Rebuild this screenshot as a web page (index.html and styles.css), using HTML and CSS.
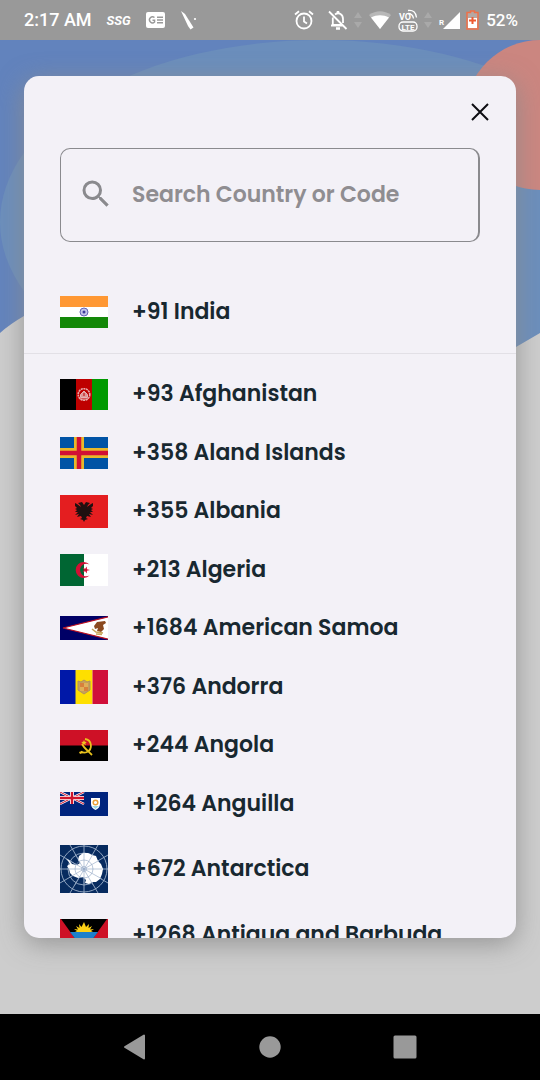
FILE: index.html
```html
<!DOCTYPE html>
<html lang="en">
<head>
<meta charset="utf-8">
<meta name="viewport" content="width=device-width, initial-scale=1">
<title>Select country</title>
<link rel="stylesheet" href="styles.css">
</head>
<body>
<header class="status">
  <div class="status-left">
    <span class="clock">2:17 AM</span>
    <span class="carrier">SSG</span>
    <svg width="20" height="16" viewBox="0 0 20 16" aria-hidden="true"><rect width="19" height="16" rx="2" fill="#fff"/><path d="M8.500 5.600A3 3 0 1 0 8.600 10V8.200H6.500M11 5.200h6M11 8h6M11 10.800h6" fill="none" stroke="#999" stroke-width="1.400"/></svg>
    <svg width="20" height="20" viewBox="0 0 20 20" aria-hidden="true"><path d="M0 1 4 4 12.500 17.500 9.500 19.500 7 16Z" fill="#fff"/><circle cx="14" cy="9" r="1.100" fill="#fff"/></svg>
  </div>
  <div class="status-right">
    <svg class="alarm" width="20" height="20" viewBox="0 0 20 20" fill="none" stroke="#fff" stroke-width="1.800" aria-hidden="true"><circle cx="10" cy="11" r="7.500"/><path d="M10 6.500V11.500l3 2M1 4.500l4-3.300M19 4.500l-4-3.300"/></svg>
    <svg width="20" height="20" viewBox="0 0 20 20" fill="none" stroke="#fff" stroke-width="1.800" aria-hidden="true"><path d="M1 1.500 18.500 19M7 4.500c4-3 8 0 8 4.500v4M4.800 7.500V15H14M3 15.500h12"/><path d="M10 1v2M8 18.500h4" stroke-width="2.500"/></svg>
    <svg width="8" height="18" viewBox="0 0 8 18" fill="#a9a9a9" aria-hidden="true"><path d="M4 1 8 7H0ZM4 17 0 11h8Z"/></svg>
    <svg width="24" height="20" viewBox="0 0 24 20" aria-hidden="true"><path d="M1 5C8 0 16 0 23 5L12 19Z" fill="#b8b8b8"/><path d="M3 7.500C9 4.500 15 4.500 21 7.500L12 19Z" fill="#fff"/></svg>
    <svg width="20" height="24" viewBox="0 0 20 24" aria-hidden="true"><text x="1" y="12" font-size="9">VO</text><rect x="1" y="14" width="18" height="9" rx="4" fill="none" stroke="#fff" stroke-width="1.300"/><text x="3.500" y="21.500" font-size="8">LTE</text><path d="M10 2.500c5-1 8 2 8.500 7M10 5.500c3 0 5 2 5.500 5" fill="none" stroke="#fff" stroke-width="1.300"/></svg>
    <svg width="8" height="18" viewBox="0 0 8 18" fill="#a9a9a9" aria-hidden="true"><path d="M4 1 8 7H0ZM4 17 0 11h8Z"/></svg>
    <svg width="22" height="20" viewBox="0 0 22 20" aria-hidden="true"><path d="M22 2V19H5Z" fill="#fff"/><text x="1" y="15" font-size="8">R</text></svg>
    <svg width="14" height="20" viewBox="0 0 14 20" aria-hidden="true"><path d="M4.500 2.500V1h4v1.500H12V19H1V2.500Z" fill="#b5a8a4" stroke="#ee7048" stroke-width="1.500"/><path d="M2 8h9v10H2Z" fill="#fff"/><path d="M6.500 7v7M3 10.500h7" stroke="#ee5a30" stroke-width="2"/></svg>
    <span class="level">52%</span>
  </div>
</header>

<main class="screen">
  <svg class="backdrop" viewBox="0 0 540 320" preserveAspectRatio="none" aria-hidden="true">
    <rect width="540" height="320" fill="#6283bd"/>
    <ellipse cx="320" cy="182" rx="320" ry="182" fill="#6b8ebc"/>
    <circle cx="540" cy="75" r="75" fill="#cb8680"/>
    <path d="M0 293Q10 284 24 276L270 230 516 307 540 293V320H0Z" fill="#cdcdcd"/>
  </svg>

  <section class="dialog" role="dialog" aria-label="Select country">
    <div class="dialog-head">
      <button class="close" type="button" aria-label="Close"><svg width="24" height="24" viewBox="0 0 24 24" fill="none" stroke="#0c0c12" stroke-width="2"><path d="M4 4 20 20M20 4 4 20"/></svg></button>
    </div>
    <label class="search">
      <svg width="36" height="36" viewBox="0 0 24 24" fill="#8a8a8e" aria-hidden="true"><path d="M15.500 14h-.79l-.28-.27A6.470 6.470 0 0 0 16 9.500 6.500 6.500 0 1 0 9.500 16c1.610 0 3.090-.59 4.230-1.570l.27.28v.79l5 4.990L20.490 19l-4.990-5zm-6 0a4.500 4.500 0 1 1 0-9 4.500 4.500 0 0 1 0 9z"/></svg>
      <input type="text" placeholder="Search Country or Code" aria-label="Search Country or Code">
    </label>

    <ul class="list current">
      <li><button class="country" type="button">
        <svg class="flag" viewBox="0 0 48 32" aria-hidden="true"><path fill="#fff" d="M0 0h48v32H0z"/><path fill="#ff9833" d="M0 0h48v11H0z"/><path fill="#138808" d="M0 21h48v11H0z"/><circle cx="24" cy="16" r="4" fill="#c5c5ea" stroke="#6464b8"/><circle cx="24" cy="16" r="1.500" fill="#3c3c9c"/></svg>
        +91 India</button></li>
    </ul>

    <ul class="list countries">
      <li><button class="country" type="button">
        <svg class="flag" viewBox="0 0 48 31" aria-hidden="true"><path d="M0 0h16v31H0z"/><path fill="#be0000" d="M16 0h16v31H16z"/><path fill="#090" d="M32 0h16v31H32z"/><circle cx="24" cy="15.500" r="5.800" fill="none" stroke="#e7a9a9" stroke-width="1.600" stroke-dasharray="2 .6"/><path d="M20.500 18.500v-3L24 12l3.500 3.500v3zM20 20h8" fill="#dd9898" stroke="#e7b3b3"/><path d="M24 14v3" stroke="#b00"/></svg>
        +93 Afghanistan</button></li>
      <li><button class="country" type="button">
        <svg class="flag" viewBox="0 0 48 32" aria-hidden="true"><path fill="#0053a5" d="M0 0h48v32H0z"/><path stroke="#e8b82a" stroke-width="10" d="M19 0v32M0 16h48"/><path stroke="#d21034" stroke-width="4.500" d="M19 0v32M0 16h48"/></svg>
        +358 Aland Islands</button></li>
      <li><button class="country" type="button">
        <svg class="flag" viewBox="0 0 48 33" aria-hidden="true"><path fill="#e41e20" d="M0 0h48v33H0z"/><path fill="#201010" d="m24 10-2-3-4 1 2 2 1 2-4-3-2-1v3l2 2-2 1 2 1-2 2 3 0-3 3 4-1-2 3 4-1 1 2-2 1 3 1 1 2 1-2 3-1-2-1 1-2 4 1-2-3 4 1-3-3h3l-2-2 2-1-2-1 2-2V8l-2 1-4 3 1-2 2-2-4-1z"/></svg>
        +355 Albania</button></li>
      <li><button class="country" type="button">
        <svg class="flag" viewBox="0 0 48 32" aria-hidden="true"><path fill="#fff" d="M0 0h48v32H0z"/><path fill="#063" d="M0 0h24v32H0z"/><path fill="#d21034" d="M29.500 10.500a8 8 0 1 0 0 11 6.300 6.300 0 1 1 0-11zM30 16l-3-.8-.3-2.700-1.500 2.200-2.800-.7 1.800 2-1.800 2 2.800-.7 1.500 2.200.3-2.700z"/></svg>
        +213 Algeria</button></li>
      <li><button class="country" type="button">
        <svg class="flag" viewBox="0 0 48 24" aria-hidden="true"><path fill="#000066" d="M0 0h48v24H0z"/><path fill="#fff" stroke="#bd1021" stroke-width="1.200" d="M50 .5 3 12l47 11.500z"/><path fill="#8b4a20" d="m45 5-8 1-3 4 1 3 3-1-1 3 4 1 3-3-1-4 3-2z"/><path d="M32 13l4 3 7 1M36 18l6 .5" fill="none" stroke="#c8a45a" stroke-width="1.500"/></svg>
        +1684 American Samoa</button></li>
      <li><button class="country" type="button">
        <svg class="flag" viewBox="0 0 48 34" aria-hidden="true"><path fill="#0018a8" d="M0 0h16v34H0z"/><path fill="#fedf00" d="M15.500 0h17v34h-17z"/><path fill="#d0103a" d="M32.500 0H48v34H32.500z"/><path fill="#c6a05a" stroke="#b09060" d="M18 11l3 1 3-2 3 2 3-1v9l-3 2-3 2-3-2-3-2z"/><path fill="#d8803c" d="M20 13h4v4h-4zM24 17h4v4h-4z"/><path fill="#e0b058" d="M24 13h4v4h-4zM20 17h4v4h-4z"/></svg>
        +376 Andorra</button></li>
      <li><button class="country" type="button">
        <svg class="flag" viewBox="0 0 48 31" aria-hidden="true"><path d="M0 0h48v31H0z"/><path fill="#ce1126" d="M0 0h48v15.500H0z"/><path fill="none" stroke="#e8c21c" stroke-width="1.800" d="M25 9c7 1 8 10 2 13-2 1-4 1-6-.5M22 14c2 4 5 6 10 11"/><path fill="#f0c420" d="m24 10 .8 1.800 2 .1-1.500 1.300.5 2L24 14.100l-1.800 1.100.5-2-1.500-1.300 2-.1zM19 22l3-1 1 2-3 1z"/></svg>
        +244 Angola</button></li>
      <li><button class="country" type="button">
        <svg class="flag" viewBox="0 0 48 24" aria-hidden="true"><path fill="#00247d" d="M0 0h48v24H0z"/><path stroke="#fff" stroke-width="2.400" d="m0 0 24 12M24 0 0 12"/><path stroke="#cf142b" stroke-width="1" d="m0 0 24 12M24 0 0 12"/><path stroke="#fff" stroke-width="4" d="M12 0v12M0 6h24"/><path stroke="#cf142b" stroke-width="2.400" d="M12 0v12M0 6h24"/><path fill="#fff" d="M31 6h9v6c0 3-2 5-4.500 6C33 17 31 15 31 12z"/><path fill="#9dd7e5" d="M32 14h7l-3.500 3z"/><circle cx="35.500" cy="10.500" r="2.300" fill="none" stroke="#eba13b" stroke-width="1.500"/></svg>
        +1264 Anguilla</button></li>
      <li><button class="country" type="button">
        <svg class="flag" viewBox="0 0 48 48" aria-hidden="true"><path fill="#072b5f" d="M0 0h48v48H0z"/><g fill="none" stroke="#9fb2cb" stroke-width=".9"><circle cx="24" cy="24" r="23"/><circle cx="24" cy="24" r="16"/><path d="M24 0v48M0 24h48M10 0l28 48M38 0 10 48M0 10l48 28M48 10 0 38"/></g><path fill="#fff" d="m6 14 3 1 3 4 5 1 3-2-2-3 1-4 4-3 5 0 4 2 4 1 2 5 3 3 2 5-1 5-2 5-4 3-4 0-3 2-4-1 1-3-3-3-5 1-5-2-3-3-1-4-2-3 3-2-2-3z"/><g fill="none" stroke="#8fa4c2" stroke-width=".6"><circle cx="24" cy="24" r="9"/><circle cx="24" cy="24" r="2.500"/><path d="M24 8v32M8 24h34M15 9l18 31M33 9 15 40M10 16l32 18M38 16 10 32"/></g></svg>
        +672 Antarctica</button></li>
      <li><button class="country" type="button">
        <svg class="flag" viewBox="0 0 48 32" aria-hidden="true"><path fill="#ce1126" d="M0 0h48v32H0z"/><path d="M1 0h46L24 32z"/><path fill="#1c80cc" d="M10 13h28L32 21H16z"/><path fill="#fff" d="M15.500 20h17L24 32z"/><path fill="#fcd116" d="m15 13 2-1-3-2 4 .5-2-3.500 3.500 2-.5-4 2.500 3L24 3l2 5 3-3-.5 4L32 7l-2 3.500 4-.5-3 2 2 1z"/></svg>
        +1268 Antigua and Barbuda</button></li>
    </ul>
  </section>
</main>

<nav class="navbar" aria-label="System">
  <button type="button" aria-label="Back"><svg width="24" height="26" viewBox="0 0 24 26"><path d="M21 1.500v23L2 13Z" fill="#999" stroke="#999" stroke-width="2" stroke-linejoin="round"/></svg></button>
  <button type="button" aria-label="Home"><svg width="24" height="24" viewBox="0 0 24 24"><circle cx="12" cy="12" r="10.700" fill="#999"/></svg></button>
  <button type="button" aria-label="Recent apps"><svg width="24" height="24" viewBox="0 0 24 24"><rect x=".5" y=".5" width="23" height="23" rx="1.500" fill="#999"/></svg></button>
</nav>
</body>
</html>
```
FILE: styles.css
```css
* { box-sizing: border-box; }

body {
  margin: 0;
  height: 100vh;
  display: flex;
  flex-direction: column;
  background: #cdcdcd;
  font-family: Poppins, Inter, "Noto Sans", sans-serif;
}

button {
  padding: 0;
  border: 0;
  background: none;
  font: inherit;
  color: inherit;
}

svg { display: block; flex: none; }

.status {
  display: flex;
  justify-content: space-between;
  align-items: center;
  height: 40px;
  padding: 0 22px 0 24px;
  background: #999;
  color: #fff;
  font-family: Roboto, sans-serif;
}

.status-left,
.status-right { display: flex; align-items: center; }
.status-left { gap: 15px; }
.status-right { gap: 6px; }
.status text { fill: #fff; font-family: Roboto, sans-serif; font-weight: 700; }
.clock { font-size: 18px; font-weight: 500; line-height: 20px; }
.level { font-size: 17px; font-weight: 500; line-height: 20px; }
.carrier { font-size: 13px; font-style: italic; font-weight: 700; }
.alarm { margin-right: 8px; }

.screen {
  position: relative;
  flex: 1;
  min-height: 0;
  display: flex;
  padding: 36px 24px 76px;
  overflow: hidden;
}

.backdrop {
  position: absolute;
  top: 0;
  left: 0;
  width: 100%;
  height: 320px;
}

.dialog {
  position: relative;
  flex: 1;
  min-width: 0;
  overflow: hidden;
  border-radius: 15px;
  background: #f3f1f7;
  box-shadow: 0 6px 26px rgba(140, 140, 140, 0.85);
  color: #182830;
}

.dialog-head {
  display: flex;
  justify-content: flex-end;
  padding: 24px;
}

.search {
  display: flex;
  align-items: center;
  gap: 18px;
  height: 94px;
  margin: 0 36px;
  padding: 0 17px 2px;
  border: 1px solid #8a8a8e;
  border-right-width: 2px;
  border-radius: 10px;
}

.search input {
  flex: 1;
  min-width: 0;
  padding: 0;
  border: 0;
  outline: 0;
  background: none;
  font: inherit;
  font-size: 22px;
  font-weight: 600;
  color: #182830;
}

.search input::placeholder { color: #8f8d91; opacity: 1; }

.list {
  display: flex;
  flex-direction: column;
  gap: 24px;
  margin: 0;
  padding: 24px 36px;
  list-style: none;
}

.current {
  margin-top: 29px;
  border-bottom: 1px solid #e2e0e6;
}

.countries { padding-top: 23px; }

.country {
  display: flex;
  align-items: center;
  gap: 24px;
  width: 100%;
  min-height: 34px;
  font-size: 22px;
  font-weight: 600;
  line-height: 34px;
  text-align: left;
  white-space: nowrap;
}

.list li:nth-child(even) .country { min-height: 35px; }

.flag { width: 48px; }

.navbar {
  display: flex;
  justify-content: center;
  align-items: center;
  gap: 111px;
  height: 66px;
  background: #000;
}
```
